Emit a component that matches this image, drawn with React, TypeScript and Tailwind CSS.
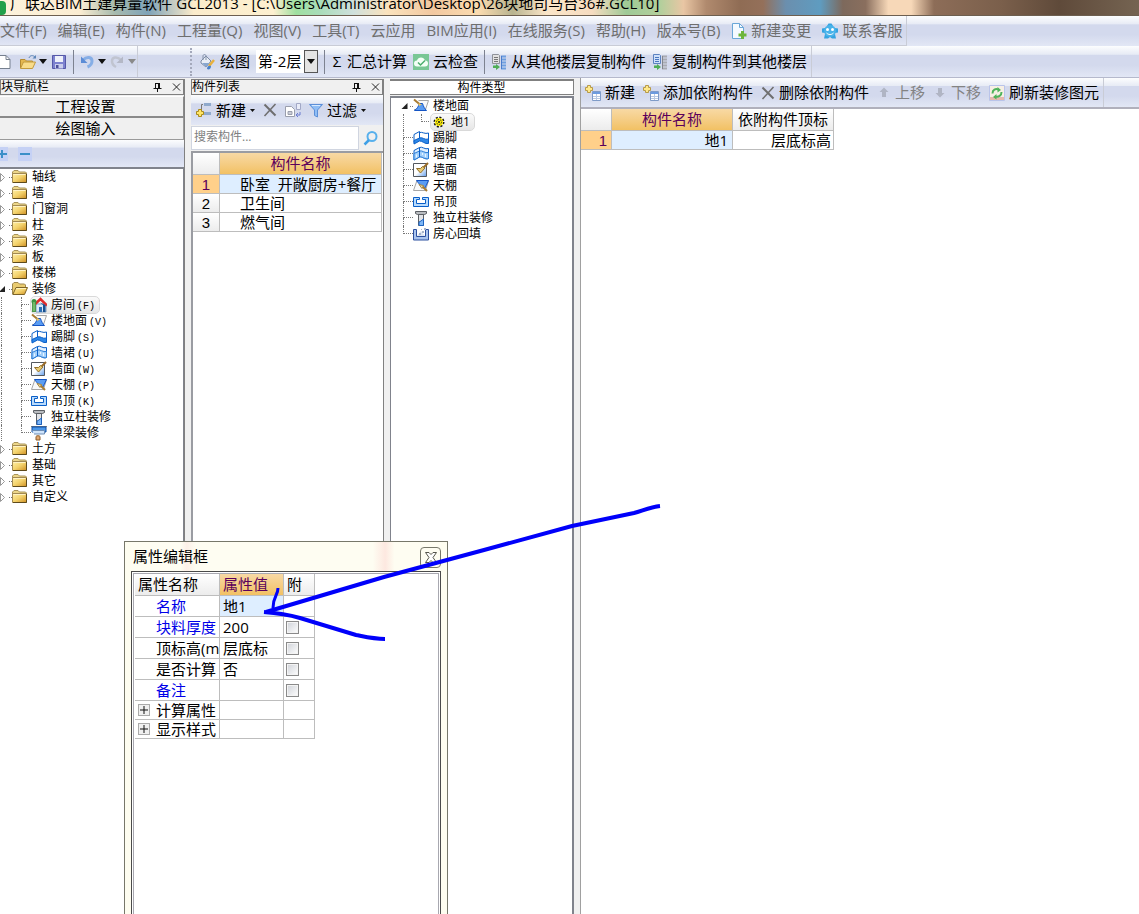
import type { ReactNode } from 'react';
import clsx from 'clsx';

const BAR =
  'bg-[linear-gradient(to_bottom,#fcfdfe_0%,#e7ebf5_27%,#d3d9ed_29%,#d3d9ed_62%,#e2e7f5_100%)]';
const HEAD_ORANGE = 'bg-gradient-to-b from-[#f8d9a4] to-[#f2c163] text-[#5b005b]';
const HEAD_GRAY = 'bg-gradient-to-b from-white to-[#ececec]';
const CELL = 'border-r border-b border-[#bdbdbd] p-0 font-normal whitespace-nowrap overflow-hidden';

/* ---------- icons ---------- */

function Svg({ children, w = 16 }: { children: ReactNode; w?: number }) {
  return (
    <svg width={w} height="16" viewBox={`0 0 ${w} 16`} fill="none" className="shrink-0" aria-hidden="true">
      {children}
    </svg>
  );
}

const icons = {
  folder: (
    <Svg>
      <path d="M.5 5V3L2 1.500h4L7.500 3h6l1 1v1" fill="#ecd688" stroke="#a8935a" />
      <path d="M.5 4.500h14v9H.5z" fill="url(#folderFill)" stroke="#a38a52" />
      <path d="M1.500 5.500h12" stroke="#fff3c4" />
      <path d="M1 13.500h13.500V5" stroke="#5d4a1c" />
    </Svg>
  ),
  folderOpen: (
    <Svg>
      <path d="M.5 13V3L2 1.500h4L7.500 3h5l1 1v2" fill="#e9cb70" stroke="#a0884e" />
      <path d="M.8 13.500 4 6.500h11.500l-3 7z" fill="url(#folderFill)" stroke="#7d6428" />
      <path d="M4.500 7.500H14" stroke="#fff3c0" />
    </Svg>
  ),
  room: (
    <Svg>
      <path d="M5 7h10v8H5z" fill="#d9e9f8" stroke="#7b9cc0" />
      <path d="M8 10h3v5H8z" fill="#2c6fb5" />
      <path d="m3 8 6.500-6L16 8.500" stroke="#e02a2a" strokeWidth="2.500" />
      <path d="M9 5.500 12 8v7h2.500V8z" fill="#174f91" />
      <path d="M1 6h4v9H1z" fill="#4d9a4d" />
      <circle cx="3" cy="4.500" r="2.500" fill="#3f9444" />
      <path d="M3 5v9" stroke="#9fdb8b" />
    </Svg>
  ),
  floor: (
    <Svg>
      <path d="M5.500 2.500h10l-3 9H1" fill="#fafafa" stroke="#a6a6a6" />
      <path d="M6.500 5.500h3c1 3 2 5 4 7H1.500c2-1 4-4 5-7z" fill="#5a9cf2" stroke="#1454c4" />
      <path d="m1 1.500 6 5" stroke="#a87b30" strokeWidth="2" />
      <path d="m5.500 5 3.500 1.500-3 1.500z" fill="#e8c56a" />
    </Svg>
  ),
  skirting: (
    <Svg>
      <path d="M1 4.500 6.500 1.500v8L1 12.500zM6.500 2.500C9 1.500 12 4.500 15.500 3v9C12 13 9 9 6.500 10" fill="#fff" stroke="#0a5fc8" />
      <path d="M1 10.500 6.500 8c3-1.500 5 2.500 9 1v4.500C12 14.500 9 10.500 6.500 11L1 14z" fill="#2d87e8" stroke="#0a5fc8" />
    </Svg>
  ),
  dado: (
    <Svg>
      <path d="M1 4.500 6.500 1.500C9 0 12 4 15.500 2.500v10C12 14 9 10 6.500 11L1 14z" fill="#e3f1ff" stroke="#0a5fc8" />
      <path d="M1 7.500 6.500 5C9 4 12 7.500 15.500 6.500v6C12 14 9 10 6.500 11L1 14z" fill="#a3d0fb" stroke="#2d7fd8" />
      <path d="M6.500 1.500V11" stroke="#0a5fc8" />
      <path d="M3.500 8.500v3M9.500 7v2M12.500 8v3" stroke="#e8f4ff" />
    </Svg>
  ),
  wall: (
    <Svg>
      <path d="M.5 1.500h13v13H.5z" fill="url(#wallFill)" stroke="#54585e" />
      <path d="m10 6 5-5" stroke="#9a6c27" strokeWidth="2" />
      <path d="m3.500 6.500 4 4.500 4.500-5-2.500-1.500-2 2z" fill="#e9ca73" stroke="#94712b" />
    </Svg>
  ),
  ceiling: (
    <Svg>
      <path d="M4 2.500h11.500l-3 10H.5z" fill="#fafafa" stroke="#a6a6a6" />
      <path d="M3.500 2.500h12L12 10c-3 0-5-3-8.500-7.500z" fill="#5a9cf2" stroke="#1454c4" />
      <path d="m9 8 5 5" stroke="#a87b30" strokeWidth="2" />
      <path d="m6 6.500 4.500 1L9 10.500z" fill="#f0dc9c" stroke="#a2854a" />
    </Svg>
  ),
  suspended: (
    <Svg>
      <path d="M.5 3.500h6v2h-3v4h9v-4h-3v-2h6v9H.5z" fill="#b9dbfc" stroke="#0a5fc8" />
    </Svg>
  ),
  column: (
    <Svg>
      <path d="M2.500 1.500h11v2l-2 1h-7l-2-1z" fill="#b9bcc0" stroke="#5b5f64" />
      <path d="M5.500 4.500h5v11h-5z" fill="#e2e4e8" stroke="#5b5f64" />
      <path d="m6 12 2-1 2.500-2v6.500H6z" fill="#7fb7f6" stroke="#1d63c0" />
    </Svg>
  ),
  beam: (
    <Svg>
      <path d="M0 1.500h16" stroke="#777" />
      <path d="M1 2h14v5H1z" fill="#4c97e8" stroke="#0d4fa8" />
      <path d="M1 5.500h12.500V9H3" fill="#cfe4fb" stroke="#6d8db5" />
      <path d="M5 11.500c0-1 4-1 4 0V15H5z" fill="#e3a970" stroke="#8a5a2a" />
    </Svg>
  ),
  backfill: (
    <Svg>
      <path d="M.5 3.500h3v7h9v-7h3v10.500H.5z" fill="#a9c4ee" stroke="#2c50a0" />
      <path d="M4 10 8 5l4 5z" fill="#dbe4f2" />
      <path d="M6 7h2v2H6zM9 5h2v2H9zM11 2h2v2h-2zM8 3h1v1H8z" fill="#a8b5cb" />
    </Svg>
  ),
  gear: (
    <Svg w={12}>
      <circle cx="6" cy="8" r="4.500" stroke="#111" strokeWidth="2" strokeDasharray="2 1.500" />
      <circle cx="6" cy="8" r="4" fill="#ffef00" />
      <circle cx="6" cy="8" r="2.500" stroke="#333" strokeDasharray="1.500 1" />
      <circle cx="6" cy="8" r="1" fill="#111" />
    </Svg>
  ),
  openDoc: (
    <Svg w={18}>
      <path d="M10 4c1-3 4-3 6-1" stroke="#5c86b8" />
      <path d="m17 1v3.500h-3.500z" fill="#5c86b8" />
      <path d="M1.500 14V5.500H6L7.500 7h6v2" fill="#e5b850" stroke="#b58a32" />
      <path d="m1.500 14.500 3-6.500h12l-3 6.500z" fill="#f9dc8a" stroke="#c29a3e" />
    </Svg>
  ),
  save: (
    <Svg>
      <path d="M1.500 1.500h13v13h-13z" fill="#7d82cf" stroke="#5558a8" />
      <path d="M4 2h8v6H4z" fill="#eef1fa" />
      <path d="M4 10h8v4.500H4z" fill="#c9cdec" />
      <path d="M5 11h2.500v3H5z" fill="#4c4f9a" />
    </Svg>
  ),
  undo: (
    <Svg w={14}>
      <path d="M3 6c4-4 9-3 9 1 0 3-2 5-4.500 6" stroke="#86aee6" strokeWidth="3" />
      <path d="M1 2.500V9h6.500z" fill="#5c8cd6" />
    </Svg>
  ),
  redo: (
    <Svg w={14}>
      <path d="M11 6C7 2 2 3 2 7c0 3 2 5 4 6" stroke="#c0c4d0" strokeWidth="2.500" />
      <path d="M13 2.500V9H6.500z" fill="#b4b8c6" />
    </Svg>
  ),
  paint: (
    <Svg w={17}>
      <path d="m2 7 5-5 5 5-5 6-5-4z" fill="#e8edf6" stroke="#7c8ba4" />
      <path d="M3 9h8l-4 4z" fill="#88a6cf" />
      <path d="M4 6V2c0-2 3-2 3 0v4" stroke="#8391a8" />
      <path d="m10 12 5-6" stroke="#e8b13c" strokeWidth="2.500" />
      <path d="M8 15c0-3 2-4 4-3 0 3-2 4-4 3z" fill="#4a82c8" />
    </Svg>
  ),
  cloudCheck: (
    <Svg>
      <path d="M0 0h16v16H0z" fill="#79c795" />
      <path d="M4 12.500a3 3 0 0 1 0-6c1-4 7-4 8 0a3 3 0 0 1 0 6z" fill="#f3fff6" />
      <path d="m5 8.500 2.500 2.500L12 6.500" stroke="#4cae6e" strokeWidth="1.500" />
    </Svg>
  ),
  copyFrom: (
    <Svg>
      <path d="M1.500 .5h6l1 1v8h-7z" fill="#e2e2e2" stroke="#8f9299" />
      <path d="M3 3.500h4M3 5.500h4M3 7.500h4" stroke="#777" />
      <path d="M10 2.500h5M10 5.500h5M10 8.500h5M10 11.500h5M10 14.500h5" stroke="#6f9fe0" strokeWidth="2" />
      <path d="M10.500 2v13" stroke="#4a7ccc" />
      <path d="M2 11.500h3V10l4 3-4 3v-2H2z" fill="#4fae56" />
    </Svg>
  ),
  copyTo: (
    <Svg>
      <path d="M1.500 .5h6l1 1v8h-7z" fill="#cfe0f9" stroke="#5b82c0" />
      <path d="M3 3.500h4M3 5.500h4M3 7.500h4" stroke="#4a78c0" />
      <path d="M10 2.500h5M10 5.500h5M10 8.500h5M10 11.500h5M10 14.500h5" stroke="#a9abb2" strokeWidth="2" />
      <path d="M10.500 2v13" stroke="#83868d" />
      <path d="M2 11.500h3V10l4 3-4 3v-2H2z" fill="#4fae56" />
    </Svg>
  ),
  newChange: (
    <Svg>
      <path d="M1.500.5h7l4 4v11h-11z" fill="#f4faff" stroke="#6aa7d8" />
      <path d="M8.500.5v4h4" stroke="#6aa7d8" />
      <path d="M10 8h3v2.500h2.500v3H13V16h-3v-2.500H7.500v-3H10z" fill="#6cb53c" />
    </Svg>
  ),
  service: (
    <Svg>
      <path d="M5 3 6.500.5h3L11 3zM0 5.500l3-.5v5L0 9.500zM16 5.500 13 5v5l3-.5zM3 11h10l1 4.500h-4L8 14l-2 1.500H2z" fill="#35a3e0" />
      <circle cx="8" cy="8" r="6" fill="#49b3ea" />
      <circle cx="5.500" cy="6.500" r="1.500" fill="#fff" />
      <circle cx="10.500" cy="6.500" r="1.500" fill="#fff" />
      <path d="M4.500 10c2 2 5 2 7 0" stroke="#fff" />
    </Svg>
  ),
  newItem: (
    <Svg w={17}>
      <path d="M9 2.500h7M9 11.500h7" stroke="#8fa9cc" strokeWidth="3" />
      <path d="M8 2.500H6.500V8M7 11.500h2" stroke="#777" />
      <path d="M3.500 7.500h3v2h2v3h-2v2h-3v-2h-2v-3h2z" fill="#ffe566" stroke="#a98a1e" />
    </Svg>
  ),
  cross: (
    <Svg w={14}>
      <path d="m1.500 2.500 11 11" stroke="#6e6e6e" strokeWidth="2" />
      <path d="m12.500 2-11 12" stroke="#6e6e6e" strokeWidth="1.500" />
    </Svg>
  ),
  copy: (
    <Svg>
      <path d="M.5 4.500h6l3 3v7h-9z" fill="#fff" stroke="#9a9eac" />
      <path d="M3 9.500h4v3H3z" fill="#c9ccd6" stroke="#9a9eac" />
      <path d="M11.500 1.500h4v6h-4z" fill="#e9ecf8" stroke="#a2a8c6" />
      <path d="M15 10v3h-3M13 11l-2 2 2 2" stroke="#6b7cd0" />
    </Svg>
  ),
  filter: (
    <Svg w={14}>
      <path d="M.5 2.500h13L8.500 8v7l-3-1.500V8z" fill="#8fbdf5" stroke="#5c8fd8" />
      <path d="M3 3.500h8" stroke="#d8eaff" />
    </Svg>
  ),
  search: (
    <Svg>
      <circle cx="9" cy="6.500" r="4.500" stroke="#58b0ec" strokeWidth="2" />
      <path d="m6 10-4.500 4.500" stroke="#3fa0e6" strokeWidth="2.500" />
    </Svg>
  ),
  addTable: (
    <Svg>
      <path d="M7.500 6.500h8v9h-8z" fill="#fff" stroke="#7f9bc8" />
      <path d="M8 7h7v2H8z" fill="#6c9be0" />
      <path d="M8 11.500h7M8 13.500h7M11.500 9v6" stroke="#b8c8e2" />
      <path d="M2.500.5h3v2h2v3h-2v2h-3v-2h-2v-3h2z" fill="#ffe98a" stroke="#b79a4a" />
    </Svg>
  ),
  up: (
    <Svg w={14}>
      <path d="M7 2.500 11.500 7H9v5H5V7H2.500z" fill="#b0b5c4" />
    </Svg>
  ),
  down: (
    <Svg w={14}>
      <path d="M7 12.500 11.500 8H9V3H5v5H2.500z" fill="#b0b5c4" />
    </Svg>
  ),
  refresh: (
    <Svg>
      <path d="M.5.5h15v15H.5z" fill="#f6efe4" stroke="#b9c4ea" />
      <path d="M1 12h14v3H1z" fill="#e5b8ae" />
      <path d="M3.500 8.500c0-4 3-5 6-4M12.500 7c0 4-3 5-6 4.500" stroke="#4fb35a" strokeWidth="2" />
      <path d="M8.500 2v5.500L12 5zM7.500 9v5.500L4 12z" fill="#4fb35a" />
    </Svg>
  ),
  pin: (
    <Svg w={9}>
      <path d="M2.500 4v5M5.500 4v5M6.500 4v5M2 4.500h5M.5 9.500h8M4.500 10v3" stroke="#111" />
    </Svg>
  ),
  close: (
    <Svg w={9}>
      <path d="m1 4.500 7 7M8 4.500l-7 7" stroke="#222" />
    </Svg>
  ),
};

type IconName = keyof typeof icons;

function Caret({ muted }: { muted?: boolean }) {
  return (
    <svg width="8" height="5" viewBox="0 0 8 5" className="shrink-0" aria-hidden="true">
      <path d="M0 0h8L4 5z" fill={muted ? '#8a8a8a' : '#111'} />
    </svg>
  );
}

function SmallCaret() {
  return (
    <svg width="5" height="3" viewBox="0 0 5 3" className="shrink-0" aria-hidden="true">
      <path d="M0 0h5L2.500 3z" fill="#111" />
    </svg>
  );
}

/* ---------- data ---------- */

const menus = ['文件(F)', '编辑(E)', '构件(N)', '工程量(Q)', '视图(V)', '工具(T)', '云应用', 'BIM应用(I)', '在线服务(S)', '帮助(H)', '版本号(B)'];

type Node = { icon: IconName; label: string; hotkey?: string };

const foldersTop = ['轴线', '墙', '门窗洞', '柱', '梁', '板', '楼梯'];
const foldersBottom = ['土方', '基础', '其它', '自定义'];

const decoration: Node[] = [
  { icon: 'room', label: '房间', hotkey: '(F)' },
  { icon: 'floor', label: '楼地面', hotkey: '(V)' },
  { icon: 'skirting', label: '踢脚', hotkey: '(S)' },
  { icon: 'dado', label: '墙裙', hotkey: '(U)' },
  { icon: 'wall', label: '墙面', hotkey: '(W)' },
  { icon: 'ceiling', label: '天棚', hotkey: '(P)' },
  { icon: 'suspended', label: '吊顶', hotkey: '(K)' },
  { icon: 'column', label: '独立柱装修' },
  { icon: 'beam', label: '单梁装修' },
];

const types: Node[] = [
  { icon: 'skirting', label: '踢脚' },
  { icon: 'dado', label: '墙裙' },
  { icon: 'wall', label: '墙面' },
  { icon: 'ceiling', label: '天棚' },
  { icon: 'suspended', label: '吊顶' },
  { icon: 'column', label: '独立柱装修' },
  { icon: 'backfill', label: '房心回填' },
];

const rooms = ['卧室  开敞厨房+餐厅', '卫生间', '燃气间'];

const props = [
  { name: '名称', value: '地1', blue: true },
  { name: '块料厚度', value: '200', blue: true, check: true },
  { name: '顶标高(m', value: '层底标', check: true },
  { name: '是否计算', value: '否', check: true },
  { name: '备注', value: '', blue: true, check: true },
  { name: '计算属性', value: '', group: true },
  { name: '显示样式', value: '', group: true },
];

/* ---------- pieces ---------- */

function ToolButton({ icon, label, muted, drop }: { icon: IconName; label: string; muted?: boolean; drop?: boolean }) {
  return (
    <button type="button" className={clsx('flex shrink-0 items-center gap-1 whitespace-nowrap', muted && 'text-[#838383]')}>
      {icons[icon]}
      <span>{label}</span>
      {drop && <SmallCaret />}
    </button>
  );
}

function PanelHeader({ title }: { title: string }) {
  return (
    <header className="flex h-4 shrink-0 items-center border border-[#808080] bg-[#f0f0f0] text-[12px] leading-none">
      <h2 className="flex-1">{title}</h2>
      <button type="button" aria-label="固定" className="mr-2.5">{icons.pin}</button>
      <button type="button" aria-label="关闭" className="mr-0.5">{icons.close}</button>
    </header>
  );
}

function Branch({ last }: { last?: boolean }) {
  return (
    <span className="flex h-full w-2.5 shrink-0 flex-col">
      <span className="h-2 border-b border-l border-dotted border-[#777]" />
      {!last && <span className="h-2 border-l border-dotted border-[#777]" />}
    </span>
  );
}

function Folder({ label, open }: { label: string; open?: boolean }) {
  return (
    <li className="flex h-4 items-center">
      <svg width="6" height="9" viewBox="0 0 6 9" className="shrink-0" aria-hidden="true">
        {open ? <path d="M5 1v6H-1z" fill="#222" /> : <path d="M.5.5v8l4-4z" fill="#fff" stroke="#999" />}
      </svg>
      <span className="ml-[3px] w-[3px] border-t border-dotted border-[#777]" />
      {icons[open ? 'folderOpen' : 'folder']}
      <span className="ml-1">{label}</span>
    </li>
  );
}

function TreeLabel({ node, selected }: { node: Node; selected?: boolean }) {
  return (
    <span
      className={clsx(
        'flex h-4 items-center gap-1 whitespace-nowrap',
        selected && 'rounded-sm bg-gradient-to-b from-[#fafafa] to-[#e6e6e6] pr-1 outline outline-[#d9d9d9]',
      )}
    >
      {icons[node.icon]}
      <span>
        {node.label}
        {node.hotkey && <span className="ml-0.5 font-['Liberation_Mono'] text-[10px]">{node.hotkey}</span>}
      </span>
    </span>
  );
}

function Separator() {
  return <span className="h-6 w-px shrink-0 bg-[#7d8290]" />;
}

function NavPanel() {
  return (
    <section className="flex w-[185px] shrink-0 flex-col border-r border-[#808080]">
      <PanelHeader title="块导航栏" />
      <div className="flex flex-col bg-[#f0f0f0] pt-px text-[15px] leading-none">
        <button type="button" className="h-[22px] border-t border-r border-b-2 border-[#8a8a8a] border-t-white pr-3">工程设置</button>
        <button type="button" className="h-[22px] border-r border-b border-[#9a9a9a] pr-3">绘图输入</button>
      </div>
      <div className={clsx('flex h-[27px] shrink-0 items-center gap-2.5', BAR)}>
        <button type="button" aria-label="展开" className="flex h-3.5 w-2 items-center bg-[#c5d1f5]">
          <svg width="8" height="12" viewBox="0 0 8 12"><path d="M0 6h7M2 2v8" stroke="#3b8fc8" strokeWidth="2" /></svg>
        </button>
        <button type="button" aria-label="折叠" className="flex h-3.5 w-3.5 items-center justify-center bg-[#c5d1f5]">
          <span className="h-0.5 w-2.5 bg-[#3b8fc8]" />
        </button>
      </div>
      <ul className="min-h-0 flex-1 border-t-2 border-r border-[#80838c] bg-white text-[12px] leading-none">
        {foldersTop.map((f) => <Folder key={f} label={f} />)}
        <Folder label="装修" open />
        {decoration.map((n, i) => (
          <li key={n.label} className="flex h-4 items-center">
            <span className="ml-px h-full w-5 shrink-0 border-l border-dotted border-[#777]" />
            <Branch last={i === decoration.length - 1} />
            <TreeLabel node={n} selected={i === 0} />
          </li>
        ))}
        {foldersBottom.map((f) => <Folder key={f} label={f} />)}
      </ul>
    </section>
  );
}

function ListPanel() {
  return (
    <section className="flex w-[193px] shrink-0 flex-col border-r border-[#808080]">
      <PanelHeader title="构件列表" />
      <div className={clsx('flex h-[30px] shrink-0 items-center gap-2 px-1 text-[15px]', BAR)}>
        <ToolButton icon="newItem" label="新建" drop />
        <button type="button" aria-label="删除">{icons.cross}</button>
        <button type="button" aria-label="复制">{icons.copy}</button>
        <ToolButton icon="filter" label="过滤" drop />
      </div>
      <div className="flex h-[26px] shrink-0 items-center bg-[#f0f0f0]">
        <input
          aria-label="搜索构件"
          placeholder="搜索构件..."
          className="h-6 min-w-0 flex-1 border border-[#d0d5e0] bg-white px-0.5 pb-1 text-[12px] outline-none placeholder:text-[#808080]"
        />
        <button type="button" aria-label="搜索" className="px-1">{icons.search}</button>
      </div>
      <div className="min-h-0 flex-1 border-t-2 border-l-2 border-[#9a9ca2] bg-white">
        <table className="w-[189px] table-fixed border-separate border-spacing-0 text-[15px] leading-none">
          <colgroup>
            <col className="w-[27px]" />
            <col />
          </colgroup>
          <thead>
            <tr className="h-[22px]">
              <th className={clsx(CELL, HEAD_GRAY)} />
              <th className={clsx(CELL, HEAD_ORANGE)}>构件名称</th>
            </tr>
          </thead>
          <tbody>
            {rooms.map((r, i) => (
              <tr key={r} className="h-[19px]">
                <th className={clsx(CELL, "font-['Liberation_Sans']", i === 0 ? 'bg-[#ffd08a] text-[#5b005b]' : HEAD_GRAY)}>{i + 1}</th>
                <td className={clsx(CELL, 'pl-5 whitespace-pre', i === 0 && 'bg-[#deeeff]')}>{r}</td>
              </tr>
            ))}
          </tbody>
        </table>
      </div>
    </section>
  );
}

function TypePanel() {
  return (
    <section className="flex w-[184px] shrink-0 flex-col">
      <h2 className="flex h-4 shrink-0 items-center justify-center border-t-2 border-r border-b border-[#808080] bg-white text-[12px] leading-none">
        构件类型
      </h2>
      <div className="mt-px min-h-0 flex-1 border-t-2 border-r-2 border-l border-[#80838c] bg-white text-[12px] leading-none">
        <ul>
          <li className="flex h-4 items-center pl-2.5">
            <svg width="8" height="8" viewBox="0 0 8 8" className="shrink-0" aria-hidden="true">
              <path d="M6.500 1v6H.5z" fill="#222" />
            </svg>
            <span className="ml-px w-[3px] border-t border-dotted border-[#777]" />
            <TreeLabel node={{ icon: 'floor', label: '楼地面' }} />
          </li>
          <li className="flex h-4 items-center pl-3">
            <span className="h-full w-[18px] shrink-0 border-l border-dotted border-[#777]" />
            <Branch last />
            <span className="flex h-4 items-center gap-1.5 rounded-sm bg-gradient-to-b from-[#fafafa] to-[#e6e6e6] px-0.5 pr-1 outline outline-[#d9d9d9]">
              {icons.gear}
              <span>地1</span>
            </span>
          </li>
          {types.map((n, i) => (
            <li key={n.label} className="flex h-4 items-center pl-3">
              <Branch last={i === types.length - 1} />
              <TreeLabel node={n} />
            </li>
          ))}
        </ul>
      </div>
    </section>
  );
}

function DetailPanel() {
  return (
    <section className="flex min-w-0 flex-1 flex-col border-l border-[#a0a0a0] bg-white">
      <div className={clsx('flex h-[31px] shrink-0 border-b-2 border-[#b0b0bc] text-[15px]', BAR)}>
        <div className="flex items-center gap-2 border-r border-[#c9ccd6] px-1">
          <ToolButton icon="addTable" label="新建" />
          <ToolButton icon="addTable" label="添加依附构件" />
          <ToolButton icon="cross" label="删除依附构件" />
          <ToolButton icon="up" label="上移" muted />
          <ToolButton icon="down" label="下移" muted />
          <ToolButton icon="refresh" label="刷新装修图元" />
        </div>
      </div>
      <table className="w-[253px] table-fixed border-separate border-spacing-0 text-[15px] leading-none">
        <colgroup>
          <col className="w-[31px]" />
          <col className="w-[121px]" />
          <col />
        </colgroup>
        <thead>
          <tr className="h-[22px]">
            <th className={clsx(CELL, HEAD_GRAY)} />
            <th className={clsx(CELL, HEAD_ORANGE)}>构件名称</th>
            <th className={clsx(CELL, HEAD_GRAY)}>依附构件顶标</th>
          </tr>
        </thead>
        <tbody>
          <tr className="h-[19px]">
            <th className={clsx(CELL, "bg-[#ffd08a] pr-1 text-right font-['Liberation_Sans'] text-[#5b005b]")}>1</th>
            <td className={clsx(CELL, 'bg-[#deeeff] pr-1 text-right')}>地1</td>
            <td className={clsx(CELL, 'pr-0.5 text-right')}>层底标高</td>
          </tr>
        </tbody>
      </table>
    </section>
  );
}

function PropertyDialog() {
  return (
    <section
      role="dialog"
      aria-label="属性编辑框"
      className="absolute top-[541px] bottom-0 left-[124px] flex w-[324px] flex-col border border-b-0 border-[#77776a] bg-[#fefdf0] px-1.5"
    >
      <header className="flex h-[29px] shrink-0 items-center bg-[linear-gradient(to_right,#fefdf2_0,#fefdf2_16%,#fdf0e8_18%,#fefdf2_21%,#fefdf2_78%,#fde8e0_82%,#fefdf2_85%)] text-[15px]">
        <h2 className="flex-1 pl-0.5">属性编辑框</h2>
        <button type="button" aria-label="关闭" className="mt-0.5 flex h-[21px] w-[21px] items-center justify-center rounded-sm border border-[#77776a]">
          <svg width="12" height="11" viewBox="0 0 12 11" aria-hidden="true">
            <path d="M.5.500h3.500l2 2 2-2h3.500L8 5.500l3.500 5H8l-2-2-2 2H.5l3.500-5z" fill="#fff" stroke="#55554c" />
          </svg>
        </button>
      </header>
      <div className="min-h-0 flex-1 border border-b-0 border-[#4a4a4a] bg-white px-px pt-px">
        <div className="h-full border border-b-0 border-[#a8a8b0] pl-px">
          <table className="w-[180px] table-fixed border-separate border-spacing-0 text-[15px] leading-none">
            <colgroup>
              <col className="w-[85px]" />
              <col className="w-16" />
              <col />
            </colgroup>
            <thead>
              <tr className="h-[22px] text-left">
                <th className={clsx(CELL, HEAD_GRAY, 'pl-[3px]')}>属性名称</th>
                <th className={clsx(CELL, HEAD_ORANGE, 'pl-[3px]')}>属性值</th>
                <th className={clsx(CELL, HEAD_GRAY, 'pl-[3px]')}>附</th>
              </tr>
            </thead>
            <tbody>
              {props.map((p, i) => (
                <tr key={p.name} className={p.group ? 'h-[19px]' : 'h-[21px]'}>
                  <td className={CELL}>
                    <span className={clsx('flex items-center', p.blue && 'text-[#0000e8]')}>
                      <span className="flex w-[21px] shrink-0 pl-[3px]">
                        {p.group && (
                          <button type="button" aria-label={p.name} className="flex h-3 w-3 items-center justify-center border border-[#aaa] bg-[#f0f0f0]">
                            <svg width="8" height="8" viewBox="0 0 8 8"><path d="M0 4h8M4 0v8" stroke="#111" /></svg>
                          </button>
                        )}
                      </span>
                      {p.name}
                    </span>
                  </td>
                  <td className={clsx(CELL, 'pl-[3px]', i === 0 && 'bg-[#deeeff]')}>{p.value}</td>
                  <td className={clsx(CELL, 'pl-0.5')}>
                    {p.check && (
                      <input
                        type="checkbox"
                        aria-label={p.name}
                        className="block h-[13px] w-[13px] appearance-none border border-[#8a8a8a] bg-gradient-to-br from-[#cfd2d8] to-white shadow-[inset_0_0_0_1px_#f4f4f4]"
                      />
                    )}
                  </td>
                </tr>
              ))}
            </tbody>
          </table>
        </div>
      </div>
    </section>
  );
}

export default function App() {
  return (
    <div className="relative flex h-screen flex-col overflow-hidden bg-[#f0f0f0] font-['Open_Sans','Noto_Sans_CJK_SC',sans-serif] text-black">
      {/* shared gradients */}
      <svg width="0" height="0" className="absolute" aria-hidden="true">
        <defs>
          <linearGradient id="folderFill" x1="0" y1="0" x2="1" y2="1">
            <stop offset="0" stopColor="#fff0a8" />
            <stop offset=".5" stopColor="#f3d26c" />
            <stop offset="1" stopColor="#cf8f22" />
          </linearGradient>
          <linearGradient id="wallFill" x1="0" y1="0" x2="1" y2="1">
            <stop offset=".5" stopColor="#fff" />
            <stop offset="1" stopColor="#5f9bea" />
          </linearGradient>
        </defs>
      </svg>

      {/* Title bar */}
      <header className="flex h-4 shrink-0 items-end gap-1 overflow-hidden border-b border-[#6d5f50] bg-[linear-gradient(to_right,#fdf3dc_0,#fbedd2_7%,#a9bcae_10%,#7fa3b8_13%,#fbeccb_17%,#fdf0d0_24%,#9fe0a0_26%,#a8dcb8_28%,#cfe0dc_31%,#fbe3bd_34%,#f2c8a0_38%,#fbdcb0_42%,#b8b490_45%,#fbe6c8_48%,#f6dcc0_52%,#9fca96_55%,#b3cf9c_58%,#e9c6a4_60%,#b08a6e_62%,#8f6c54_65%,#94705a_67%,#6b8fae_69%,#5f9cc0_72%,#7d695c_74%,#8a6f5e_76%,#f7d8b8_78%,#f7d8b8_80%,#8d6d58_82%,#7a5f4b_88%,#5f4a3a_93%,#756452_100%)]">
        <span className="h-3.5 w-1.5 shrink-0 rounded-r-sm bg-[#22a04a]" />
        <h1 className="text-[15px] leading-6 whitespace-nowrap">广联达BIM土建算量软件 GCL2013 - [C:\Users\Administrator\Desktop\26块地司马台36#.GCL10]</h1>
      </header>

      {/* Menu bar */}
      <nav className={clsx('flex h-[30px] shrink-0 text-[15px] text-[#6e6e6e]', BAR)}>
        <div className="flex items-center gap-[11px] border-r border-b border-[#c9ccd6] pr-1">
          {menus.map((m) => (
            <button key={m} type="button" className="shrink-0 whitespace-nowrap">{m}</button>
          ))}
          <button type="button" className="flex shrink-0 items-center gap-1">{icons.newChange}新建变更</button>
          <button type="button" className="flex shrink-0 items-center gap-1">{icons.service}联系客服</button>
        </div>
      </nav>

      {/* Main toolbar */}
      <div className={clsx('flex h-8 shrink-0 border-b border-[#b5b9cc] text-[15px]', BAR)}>
        <div className="flex w-[138px] shrink-0 items-center border-r border-[#c9ccd6]">
          <button type="button" aria-label="新建工程">
            <Svg w={11}><path d="M-2 1.500h8l4 4v9H-2z" fill="#fff" stroke="#76808f" /><path d="M6 1.500v4h4" stroke="#76808f" /></Svg>
          </button>
          <button type="button" aria-label="打开" className="ml-2 flex items-center gap-0.5">{icons.openDoc}<Caret /></button>
          <button type="button" aria-label="保存" className="mr-1.5 ml-1">{icons.save}</button>
          <Separator />
          <button type="button" aria-label="撤销" className="ml-1.5 flex items-center gap-1">{icons.undo}<Caret /></button>
          <button type="button" aria-label="重做" className="ml-1 flex items-center gap-1">{icons.redo}<Caret muted /></button>
        </div>
        <div className="ml-[52px] flex items-center gap-1.5 border-r border-[#c9ccd6] pr-1">
          <span className="h-7 w-[3px] border-l-2 border-dotted border-[#a4a9bb]" />
          <ToolButton icon="paint" label="绘图" />
          <span className="relative flex h-[23px] w-[62px] shrink-0">
            <select aria-label="楼层" className="w-full appearance-none bg-white pl-0.5 text-[15px] outline-none">
              <option>第-2层</option>
            </select>
            <span className="pointer-events-none absolute top-0 right-0 flex h-[23px] w-3.5 items-center justify-center border border-[#555] bg-[#e4e4e4]">
              <Caret />
            </span>
          </span>
          <Separator />
          <button type="button" className="flex shrink-0 items-center gap-1 whitespace-nowrap">
            <span className="w-3 text-center">Σ</span>
            <span>汇总计算</span>
          </button>
          <ToolButton icon="cloudCheck" label="云检查" />
          <Separator />
          <ToolButton icon="copyFrom" label="从其他楼层复制构件" />
          <ToolButton icon="copyTo" label="复制构件到其他楼层" />
        </div>
      </div>

      {/* Work area */}
      <main className="flex min-h-0 flex-1">
        <div className="flex gap-1.5 pt-px pr-1.5">
          <NavPanel />
          <ListPanel />
          <TypePanel />
        </div>
        <DetailPanel />
      </main>

      <PropertyDialog />

      {/* Hand-drawn arrow */}
      <svg width="400" height="145" viewBox="0 0 400 145" fill="none" stroke="#0000fa" strokeWidth="4" className="pointer-events-none absolute top-[500px] left-[262px]" aria-hidden="true">
        <path d="M398 6c-10 1-18 5-26 7L310 26 222 50 122 77 4 112" />
        <path d="M16 88c0 8-5 8-5 20" strokeWidth="3" />
        <path d="M2 112c14 1 22 2 36 6l56 17c10 2 18 4 29 4" />
      </svg>
    </div>
  );
}
